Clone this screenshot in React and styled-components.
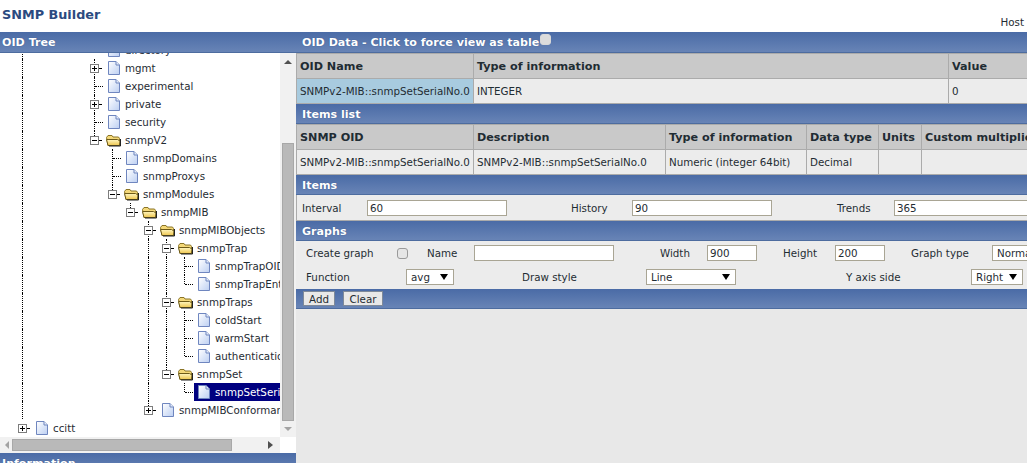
import React from 'react'
import styled, { createGlobalStyle } from 'styled-components'

const tree = [
  { d: 4, label: 'directory', guides: [0, 4] },
  { d: 4, label: 'mgmt', exp: '+', guides: [0], more: true },
  { d: 4, label: 'experimental', guides: [0], more: true },
  { d: 4, label: 'private', exp: '+', guides: [0], more: true },
  { d: 4, label: 'security', guides: [0], more: true },
  { d: 4, label: 'snmpV2', exp: '-', folder: true, guides: [0] },
  { d: 5, label: 'snmpDomains', guides: [0], more: true },
  { d: 5, label: 'snmpProxys', guides: [0], more: true },
  { d: 5, label: 'snmpModules', exp: '-', folder: true, guides: [0] },
  { d: 6, label: 'snmpMIB', exp: '-', folder: true, guides: [0] },
  { d: 7, label: 'snmpMIBObjects', exp: '-', folder: true, guides: [0], more: true },
  { d: 8, label: 'snmpTrap', exp: '-', folder: true, guides: [0, 7], more: true },
  { d: 9, label: 'snmpTrapOID', guides: [0, 7, 8], more: true },
  { d: 9, label: 'snmpTrapEnterprise', guides: [0, 7, 8] },
  { d: 8, label: 'snmpTraps', exp: '-', folder: true, guides: [0, 7], more: true },
  { d: 9, label: 'coldStart', guides: [0, 7, 8], more: true },
  { d: 9, label: 'warmStart', guides: [0, 7, 8], more: true },
  { d: 9, label: 'authenticationFailure', guides: [0, 7, 8] },
  { d: 8, label: 'snmpSet', exp: '-', folder: true, guides: [0, 7] },
  { d: 9, label: 'snmpSetSerialNo', guides: [0, 7], selected: true },
  { d: 7, label: 'snmpMIBConformance', exp: '+', guides: [0] },
  { d: 0, label: 'ccitt', exp: '+', guides: [] },
]

const GlobalStyle = createGlobalStyle`
  html, body {
    margin: 0;
    padding: 0;
    background: #fff;
  }
  body {
    font-family: "DejaVu Sans", Verdana, sans-serif;
    font-size: 10.3px;
    color: #1f2c33;
  }
  * { box-sizing: border-box; }
`

const Page = styled.div`
  width: 1027px;
  height: 463px;
  overflow: hidden;
`
const Header = styled.div`
  height: 32px;
  display: flex;
  justify-content: space-between;
  padding: 7px 3px 0 2px;
`
const Title = styled.h1`
  margin: 0;
  font-size: 12.8px;
  line-height: 16px;
  font-weight: bold;
  color: #2b4a80;
`
const Host = styled.span`
  align-self: flex-end;
  line-height: 13px;
  margin-bottom: 3px;
`
const Columns = styled.div`
  display: grid;
  grid-template-columns: 296px 731px;
  height: 431px;
`
const LeftColumn = styled.div`
  display: flex;
  flex-direction: column;
  overflow: hidden;
`
const Bar = styled.div`
  height: ${p => p.$h || 20}px;
  flex: none;
  display: flex;
  align-items: center;
  gap: ${p => p.$gap || 0}px;
  padding-left: ${p => p.$pad ?? 6}px;
  padding-top: 1px;
  background: linear-gradient(#4a6ba6, #6884b6);
  border-bottom: 1px solid #4d6c9f;
  color: #fff;
  font-weight: bold;
  font-size: 11.1px;
  text-shadow: 0 0 1px #2b4a80;
`
const TreeArea = styled.div`
  display: grid;
  grid-template-columns: 280px 16px;
  height: 384px;
  flex: none;
`
const TreeScroll = styled.div`
  overflow: hidden;
`
const TreeInner = styled.div`
  margin-top: -12px;
  padding-left: 13px;
`
const Row = styled.div`
  display: flex;
  height: 18px;
  white-space: nowrap;
`
const Cell = styled.div`
  position: relative;
  flex: none;
  width: 18px;
  height: 18px;
  display: flex;
  align-items: center;
  justify-content: center;
  ${p => p.$line && `
    &::before {
      content: '';
      position: absolute;
      left: 9px;
      top: 0;
      bottom: ${p.$line === 'half' ? '9px' : '0'};
      border-left: 1px dotted #000;
    }
  `}
  ${p => p.$tick && `
    &::after {
      content: '';
      position: absolute;
      left: ${p.$short ? '14px' : '10px'};
      right: ${p.$short ? '2px' : '0'};
      top: 9px;
      border-top: 1px dotted #000;
    }
  `}
`
const Node = styled.div`
  flex: 1;
  display: flex;
  align-items: center;
  gap: ${p => p.$folder ? '4px' : '5px'};
  margin-left: ${p => p.$selected ? '1px' : '0'};
  padding-left: ${p => p.$folder ? '3px' : p.$selected ? '4px' : '5px'};
  background: ${p => p.$selected ? '#000080' : 'transparent'};
  color: ${p => p.$selected ? '#fff' : '#1f2c33'};
`
const VScroll = styled.div`
  background: #f1f1f1;
  display: flex;
  flex-direction: column;
  align-items: center;
`
const ArrowBox = styled.div`
  height: ${p => p.$h}px;
  width: ${p => p.$w ? `${p.$w}px` : 'auto'};
  margin-left: ${p => p.$ml || 0}px;
  display: flex;
  align-items: center;
  justify-content: center;
  flex: none;
`
const VThumb = styled.div`
  width: 12px;
  height: 278px;
  margin-top: 73px;
  background: #b9b9b9;
  border: 1px solid #a8a8a8;
`
const HScrollRow = styled.div`
  height: 16px;
  flex: none;
  display: grid;
  grid-template-columns: 280px 16px;
`
const HScroll = styled.div`
  background: #f1f1f1;
  display: flex;
  align-items: center;
`
const HThumb = styled.div`
  width: 220px;
  height: 12px;
  background: #b9b9b9;
  border: 1px solid #a8a8a8;
`
const RightColumn = styled.div`
  background: #e8e8e8;
  overflow: hidden;
  display: flex;
  flex-direction: column;
`
const DataGrid = styled.div`
  display: grid;
  grid-template-columns: ${p => p.$cols};
  grid-auto-rows: 24px;
  gap: 1px;
  padding: 1px;
  margin-right: -200px;
  background: #ababab;
  flex: none;
`
const Head = styled.div`
  background: #c9c9c9;
  display: flex;
  align-items: center;
  padding-left: 3px;
  font-weight: bold;
  font-size: 11.2px;
  white-space: nowrap;
  overflow: hidden;
`
const Data = styled.div`
  background: ${p => p.$accent ? '#a8cbdf' : '#ececec'};
  display: flex;
  align-items: center;
  padding-left: 3px;
  white-space: nowrap;
  overflow: hidden;
`
const FormPanel = styled.div`
  background: #ececec;
  flex: none;
  margin-right: -200px;
  display: grid;
  grid-template-columns: ${p => p.$cols};
  align-items: center;
  height: ${p => p.$h}px;
  padding-left: ${p => p.$pad}px;
  border: ${p => p.$framed ? '1px solid #ababab' : 'none'};
  border-top: none;
`
const Field = styled.input`
  display: block;
  height: 16px;
  width: ${p => p.$w}px;
  border: 1px solid #a9a594;
  padding: 0 2px;
  margin: 0;
  background: #fff;
  font: inherit;
  color: inherit;
  outline: none;
`
const Check = styled.input`
  appearance: none;
  display: block;
  width: 11px;
  height: 11px;
  margin: 0 0 ${p => p.$light ? '6px' : '0'};
  border: 1px solid ${p => p.$light ? '#d8d8d8' : '#9a9a9a'};
  border-radius: 3px;
  background: ${p => p.$light ? '#dcdcdc' : '#e6e6e6'};
`
const SelectWrap = styled.div`
  position: relative;
  width: ${p => p.$w}px;
  height: 16px;
`
const Select = styled.select`
  appearance: none;
  display: block;
  width: 100%;
  height: 16px;
  border: 1px solid #a9a594;
  border-radius: 0;
  padding: 0 4px;
  margin: 0;
  background: #fff;
  font: inherit;
  font-weight: normal;
  color: inherit;
  outline: none;
`
const Caret = styled.svg`
  position: absolute;
  right: 6px;
  top: 5px;
  pointer-events: none;
`
const BtnBar = styled(Bar)`
  padding-left: 7px;
  padding-top: 0;
  gap: 8px;
  text-shadow: none;
`
const Button = styled.button`
  height: 15px;
  padding: 0;
  width: ${p => p.$w}px;
  background: #e8e8e8;
  border: 1px solid #7f8a99;
  font-family: inherit;
  font-size: 10.3px;
  font-weight: normal;
  color: #1f2c33;
`
const Spacer = styled.div`
  flex: 1;
  background: #e8e8e8;
`
const ExpanderSvg = styled.svg`
  position: relative;
  z-index: 1;
`

const FileIcon = () => (
  <svg width="12" height="14" viewBox="0 0 12 14">
    <defs>
      <linearGradient id="page" x1="0" y1="0" x2="1" y2="1">
        <stop offset="0" stopColor="#fff" />
        <stop offset="1" stopColor="#bccff2" />
      </linearGradient>
    </defs>
    <path d="M.5.5H8L11.5 4V13.5H.5Z" fill="url(#page)" stroke="#6f86bf" />
    <path d="M8 .5V4H11.5" fill="#e6ecfa" stroke="#6f86bf" />
  </svg>
)

const FolderIcon = () => (
  <svg width="15" height="13" viewBox="0 0 15 13">
    <defs>
      <linearGradient id="folder" x1="0" y1="0" x2="0" y2="1">
        <stop offset="0" stopColor="#fff6c0" />
        <stop offset="1" stopColor="#eec64e" />
      </linearGradient>
    </defs>
    <path d="M.5 3.5 2 1.5H6L7 3H12.5L13.5 4.5V11.5H2Z" fill="#f4d878" stroke="#8a7426" />
    <path d="M.5 5.5H11.5L14 7 13.5 11.5H2Z" fill="url(#folder)" stroke="#6d5a18" />
    <path d="M14.5 5V12H3" fill="none" stroke="#222" />
  </svg>
)

const Expander = ({ sign }) => (
  <ExpanderSvg width="9" height="9" viewBox="0 0 9 9">
    <rect x=".5" y=".5" width="8" height="8" fill="#fff" stroke="#7d7d7d" />
    <path d={sign === '+' ? 'M2 4.5H7M4.5 2V7' : 'M2 4.5H7'} stroke="#000" />
  </ExpanderSvg>
)

const Tri = ({ dir, color }) => {
  const shapes = {
    up: '0,5 4,1 8,5',
    down: '0,1 8,1 4,5',
    left: '5,0 5,8 1,4',
    right: '0,0 0,8 5,4',
  }
  const vertical = dir === 'up' || dir === 'down'
  const w = vertical ? 8 : 5
  const h = vertical ? 6 : 8
  return (
    <svg width={w} height={h} viewBox={`0 0 ${w} ${h}`}>
      <polygon points={shapes[dir]} fill={color} />
    </svg>
  )
}

function TreeRow({ item }) {
  const cells = []
  for (let i = 0; i < item.d; i++) {
    cells.push(<Cell key={i} $line={item.guides.includes(i) ? 'full' : null} />)
  }
  return (
    <Row>
      {cells}
      <Cell $line={item.more ? 'full' : item.d > 0 ? 'half' : null} $tick $short={!!item.exp}>
        {item.exp && <Expander sign={item.exp} />}
      </Cell>
      <Node $selected={item.selected} $folder={item.folder}>
        {item.folder ? <FolderIcon /> : <FileIcon />}
        <span>{item.label}</span>
      </Node>
    </Row>
  )
}

function Dropdown({ w, value }) {
  return (
    <SelectWrap $w={w}>
      <Select defaultValue={value}>
        <option>{value}</option>
      </Select>
      <Caret width="8" height="6" viewBox="0 0 8 6">
        <polygon points="0,0 8,0 4,6" fill="#000" />
      </Caret>
    </SelectWrap>
  )
}

export default function App() {
  return (
    <Page>
      <GlobalStyle />
      <Header>
        <Title>SNMP Builder</Title>
        <Host>Host</Host>
      </Header>
      <Columns>
        <LeftColumn>
          <Bar $h={21} $pad={2}>OID Tree</Bar>
          <TreeArea>
            <TreeScroll>
              <TreeInner>
                {tree.map(item => <TreeRow key={item.label} item={item} />)}
              </TreeInner>
            </TreeScroll>
            <VScroll>
              <ArrowBox $h={17}><Tri dir="up" color="#505050" /></ArrowBox>
              <VThumb />
              <ArrowBox $h={16}><Tri dir="down" color="#a3a3a3" /></ArrowBox>
            </VScroll>
          </TreeArea>
          <HScrollRow>
            <HScroll>
              <ArrowBox $h={16} $w={12}><Tri dir="left" color="#a3a3a3" /></ArrowBox>
              <HThumb />
              <ArrowBox $h={16} $w={12} $ml={32}><Tri dir="right" color="#505050" /></ArrowBox>
            </HScroll>
          </HScrollRow>
          <Bar $h={20} $pad={2}>Information</Bar>
        </LeftColumn>
        <RightColumn>
          <Bar $h={21} $gap={1}>
            OID Data - Click to force view as table
            <Check type="checkbox" $light />
          </Bar>
          <DataGrid $cols="176px 474px 276px">
            <Head>OID Name</Head>
            <Head>Type of information</Head>
            <Head>Value</Head>
            <Data $accent>SNMPv2-MIB::snmpSetSerialNo.0</Data>
            <Data>INTEGER</Data>
            <Data>0</Data>
          </DataGrid>
          <Bar>Items list</Bar>
          <DataGrid $cols="176px 191px 140px 71px 42px 304px">
            <Head>SNMP OID</Head>
            <Head>Description</Head>
            <Head>Type of information</Head>
            <Head>Data type</Head>
            <Head>Units</Head>
            <Head>Custom multiplier</Head>
            <Data>SNMPv2-MIB::snmpSetSerialNo.0</Data>
            <Data>SNMPv2-MIB::snmpSetSerialNo.0</Data>
            <Data>Numeric (integer 64bit)</Data>
            <Data>Decimal</Data>
            <Data />
            <Data />
          </DataGrid>
          <Bar>Items</Bar>
          <FormPanel $h={26} $pad={5} $framed $cols="65px 204px 61px 205px 57px 300px">
            <span>Interval</span>
            <Field $w={140} defaultValue="60" />
            <span>History</span>
            <Field $w={140} defaultValue="90" />
            <span>Trends</span>
            <Field $w={140} defaultValue="365" />
          </FormPanel>
          <Bar>Graphs</Bar>
          <FormPanel $h={24} $pad={10} $cols="91px 30px 47px 186px 47px 76px 52px 76px 81px 100px">
            <span>Create graph</span>
            <Check type="checkbox" />
            <span>Name</span>
            <Field $w={140} />
            <span>Width</span>
            <Field $w={50} defaultValue="900" />
            <span>Height</span>
            <Field $w={50} defaultValue="200" />
            <span>Graph type</span>
            <Dropdown w={90} value="Normal" />
          </FormPanel>
          <FormPanel $h={24} $pad={10} $cols="100px 116px 124px 200px 125px 100px">
            <span>Function</span>
            <Dropdown w={48} value="avg" />
            <span>Draw style</span>
            <Dropdown w={90} value="Line" />
            <span>Y axis side</span>
            <Dropdown w={52} value="Right" />
          </FormPanel>
          <BtnBar>
            <Button $w={32}>Add</Button>
            <Button $w={40}>Clear</Button>
          </BtnBar>
          <Spacer />
        </RightColumn>
      </Columns>
    </Page>
  )
}
